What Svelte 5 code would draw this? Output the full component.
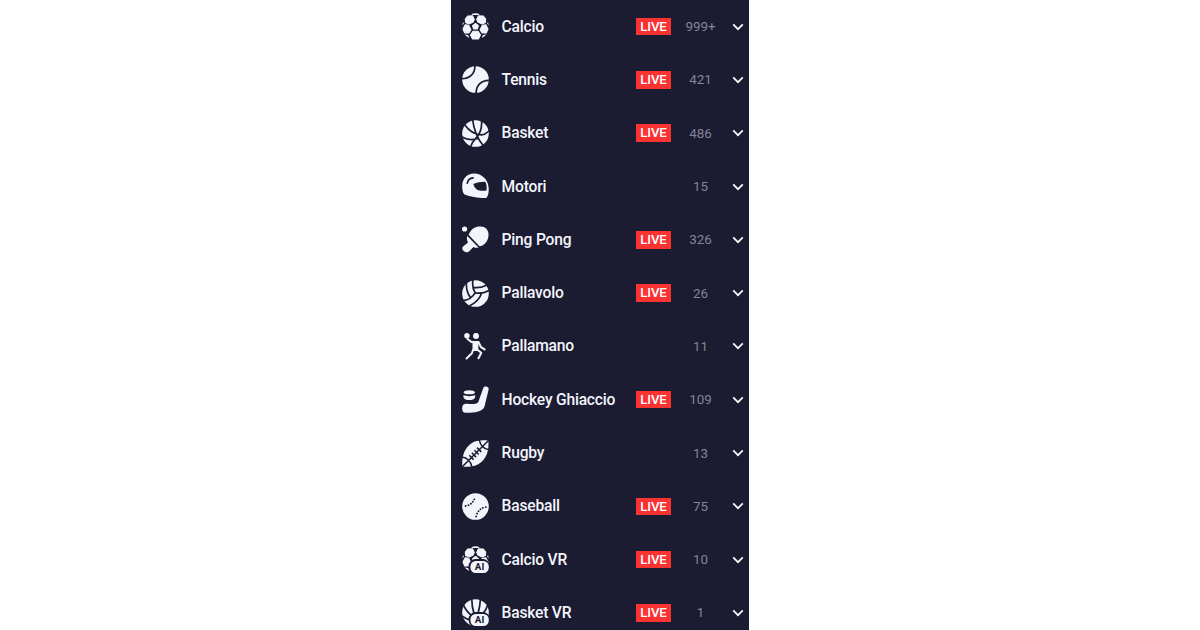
<script lang="ts">
  interface Sport {
    id: string;
    name: string;
    count: string;
    live: boolean;
  }

  const sports: Sport[] = [
    { id: 'football', name: 'Calcio', count: '999+', live: true },
    { id: 'tennis', name: 'Tennis', count: '421', live: true },
    { id: 'basket', name: 'Basket', count: '486', live: true },
    { id: 'motor', name: 'Motori', count: '15', live: false },
    { id: 'pingpong', name: 'Ping Pong', count: '326', live: true },
    { id: 'volley', name: 'Pallavolo', count: '26', live: true },
    { id: 'handball', name: 'Pallamano', count: '11', live: false },
    { id: 'hockey', name: 'Hockey Ghiaccio', count: '109', live: true },
    { id: 'rugby', name: 'Rugby', count: '13', live: false },
    { id: 'baseball', name: 'Baseball', count: '75', live: true },
    { id: 'football-vr', name: 'Calcio VR', count: '10', live: true },
    { id: 'basket-vr', name: 'Basket VR', count: '1', live: true },
  ];
</script>

{#snippet football()}
  <path d="M9.2 1.2Q13.5-.6 17.8 1.2L16.3 2H10.7zM.9 9.2L2 10.3L.4 12.6zM26.1 9.2L25 10.3L26.6 12.6zM2.6 21.3L6.3 22.3L7.2 25.1Q4.3 23.8 2.6 21.3zM24.4 21.3L20.7 22.3L19.8 25.1Q22.7 23.8 24.4 21.3z" />
  <g class="patch">
    <path d="M5.7 3L10.6 2.9L12.3 6.4L11.2 8.9L7 11L3.6 9.4L3.3 6z" />
    <path d="M21.3 3L16.4 2.9L14.7 6.4L15.8 8.9L20 11L23.4 9.4L23.7 6z" />
    <path d="M3.2 11.8L6.6 12.3L8.9 16.8L6.9 20L2.7 20L1 16z" />
    <path d="M23.8 11.8L20.4 12.3L18.1 16.8L20.1 20L24.3 20L26 16z" />
    <path d="M11 18.2H16L18.5 22L16.4 25.9H10.6L8.5 22z" />
    <path d="M13.5 10.5L16.4 12.8L15.4 15.9H11.6L10.6 12.8z" />
  </g>
{/snippet}

{#snippet aiBadge()}
  <rect class="cut" x="6.6" y="13.1" width="21.4" height="15" rx="7" />
  <rect x="8.4" y="14.9" width="18.4" height="12.1" rx="5.5" />
  <text x="17.6" y="24.3" text-anchor="middle">AI</text>
{/snippet}

{#snippet icon(id: string)}
  <svg class="icon" viewBox="0 0 27 27" aria-hidden="true">
    {#if id === 'football'}
      {@render football()}
    {:else if id === 'tennis'}
      <circle cx="13.5" cy="13.5" r="13.3" />
      <path class="seam" d="M-.5 12.6C7 12.8 13.4 8 12.8-.5M14.2 27.5C13.8 19.3 19.8 13.9 27.5 14.3" />
    {:else if id === 'basket'}
      <circle cx="13.5" cy="13.5" r="13.3" />
      <path class="seam" d="M10.6-.5Q12.4 15 21.5 26M2.5 4.5Q9.5 14.5 19.5 14.8Q24 14.6 27.5 10.2M19.4 0C20.4 8 18 14 13.6 18.6Q10 22 8.6 27M-.5 16.8Q6.5 21.3 16.2 18.5" />
    {:else if id === 'motor'}
      <path d="M.2 13.4C.2 5.2 5.2.7 11.8.5C19.5.3 26.6 6.5 26.7 15.5C26.8 20.5 26 23.5 24.2 24.9C18 25.2 8.2 23.9 2.6 21.5Q.2 19.5 .2 13.4z" />
      <path class="cut" d="M11.3 10.9C15.5 9.2 21 8.3 23.2 8.8C24.5 10.5 25 15 24.5 17.4C21 18.1 17 17.7 15.2 16.7C13 15.2 12 13 11.3 10.9z" />
      <path class="seam" d="M5.3 10.2Q6.2 5.2 11.1 4.9" stroke-linecap="round" />
    {:else if id === 'pingpong'}
      <circle cx="2.6" cy="3" r="2.6" />
      <path d="M6.6 8.8C9.5 1.7 14.3.5 18.3.5C23.5.5 26.5 4 26.5 8.7C26.5 15.5 21.8 19.7 17.5 20.2z" />
      <path d="M5.3 10L16.5 21.5C14.7 22.3 12.7 21.5 11.6 20.9C9.5 22.4 8.4 24.5 6 26C4 27 1 25.4.3 22.8C-.2 20.2 4.7 18.2 6 16.2C5 14.5 4.4 12.6 5.3 10z" />
    {:else if id === 'volley'}
      <circle cx="13.5" cy="13.5" r="13.3" />
      <path class="seam" d="M11-.3Q9.6 7 13.1 12.8Q20.5 14 27 10.5M13.1 12.8Q9.2 19.6 1.2 20.6M4.4 2.4Q3.9 11.2 8.4 17.6M11 7.4Q18 8.6 25.2 5M19.6 13.2Q16.6 21.5 7.6 25.8" />
    {:else if id === 'handball'}
      <circle cx="4.9" cy="2.7" r="2.7" />
      <circle cx="14" cy="2.9" r="3" />
      <g class="limb">
        <path d="M5.5 6L9.7 9.1H16.6L19 14.2L22.6 16.4" />
        <path d="M11 17L9.9 20.3L4.5 25.5M15.4 16.8L19.3 19.8L16.5 25.3" />
      </g>
      <path d="M10.4 8L16.6 8.4L16.2 18L10.6 18z" />
    {:else if id === 'hockey'}
      <path d="M1.5 6.4C2 3.4 12.6 3.4 13.1 6.4C12.5 8.9 2.1 8.9 1.5 6.4zM1.5 9.1C4.4 10.6 10 10.6 13.1 9.1V11.5C12.3 14.9 2.2 14.9 1.5 11.5z" />
      <path d="M21.3 2.1C22.4-.5 27.1.4 26.7 3.3L22.5 20.4C20.8 25.4 13.5 26.7 3.5 26.7C1 26.7.2 25.2.2 22.8C.2 18.5 1.9 17.7 5.3 17.8C10 18.2 15.4 18.4 16.3 16z" />
    {:else if id === 'rugby'}
      <path d="M.4 26.5C-.5 17 2.2 8.4 9.2 3.5C14.3-.1 20.7.1 26.3.6C27.1 8.7 25.4 16.7 19.7 21.7C13.9 26.8 7.4 27.3.4 26.5z" />
      <path class="seam thin" d="M-.2 27.2L27 0M17.2-.3Q19 8.8 27.2 9.8M-.2 17Q8 18 10 27.2" />
      <path class="seam thin" d="M7.3 15.3L11.6 19.6M9.8 12.8L14.1 17.1M12.4 10.2L16.7 14.5M15 7.6L19.3 11.9" />
    {:else if id === 'baseball'}
      <circle cx="13.5" cy="13.5" r="13.3" />
      <path class="stitch" d="M3.6 13Q11 11.8 13.3 3.5M14.1 23.5Q16 15.3 24.2 14" />
    {:else if id === 'football-vr'}
      {@render football()}
      {@render aiBadge()}
    {:else if id === 'basket-vr'}
      <circle cx="13.5" cy="13.5" r="13.3" />
      <path class="seam" d="M9.8-.3Q9.7 7.5 12 14.5M18.5-.2Q18 7.5 16 14.5M1.5 6.1Q4.5 12.7 9.5 16.3M25.6 6.2Q24.2 11 21.3 14M0 16.8Q4.5 20.6 9 20.8" />
      {@render aiBadge()}
    {/if}
  </svg>
{/snippet}

<nav class="sports">
  {#each sports as s (s.id)}
    <button class="row">
      {@render icon(s.id)}
      <span class="name">{s.name}</span>
      {#if s.live}<span class="live">LIVE</span>{/if}
      <span class="count">{s.count}</span>
      <svg class="chevron" viewBox="0 0 12 8" aria-hidden="true">
        <path d="M1.2 1.4L6 6.2L10.8 1.4" />
      </svg>
    </button>
  {/each}
</nav>

<style>
  .sports {
    width: 298px;
    height: 630px;
    margin: 0 auto;
    overflow: hidden;
    background: #1b1b32;
    font-family: Roboto, sans-serif;
  }

  .row {
    display: flex;
    align-items: center;
    width: 100%;
    height: 53.3px;
    padding: 0 5px 0 11px;
    border: 0;
    background: none;
    color: #f4f5fc;
    font: inherit;
    text-align: left;
  }

  .icon {
    flex: none;
    width: 27px;
    height: 27px;
    margin-right: 12.6px;
    fill: #f4f5fc;
  }
  .patch {
    stroke: #f4f5fc;
    stroke-width: 1.1;
    stroke-linejoin: round;
  }
  .cut { fill: #1b1b32; }
  .seam {
    fill: none;
    stroke: #1b1b32;
    stroke-width: 1.7;
  }
  .thin { stroke-width: 1.5; }
  .stitch {
    fill: none;
    stroke: #1b1b32;
    stroke-width: 1.8;
    stroke-linecap: round;
    stroke-dasharray: 0.1 2.75;
  }
  .limb {
    fill: none;
    stroke: #f4f5fc;
    stroke-width: 2;
    stroke-linecap: round;
    stroke-linejoin: round;
  }
  .icon text {
    fill: #1b1b32;
    font-size: 9.8px;
    font-weight: 700;
  }

  .name {
    flex: 1;
    font-size: 15.6px;
    font-weight: 500;
    letter-spacing: -0.2px;
    white-space: nowrap;
  }
  .live {
    width: 35px;
    height: 17.5px;
    background: #fa3232;
    color: #fff;
    font-size: 13.2px;
    font-weight: 500;
    letter-spacing: -0.1px;
    line-height: 17.5px;
    text-align: center;
  }
  .count {
    width: 59px;
    color: #84849a;
    font-size: 13.4px;
    letter-spacing: -0.1px;
    text-align: center;
  }
  .chevron {
    flex: none;
    width: 12px;
    height: 8px;
    margin-left: 2px;
    fill: none;
    stroke: #fff;
    stroke-width: 1.7;
  }
</style>
